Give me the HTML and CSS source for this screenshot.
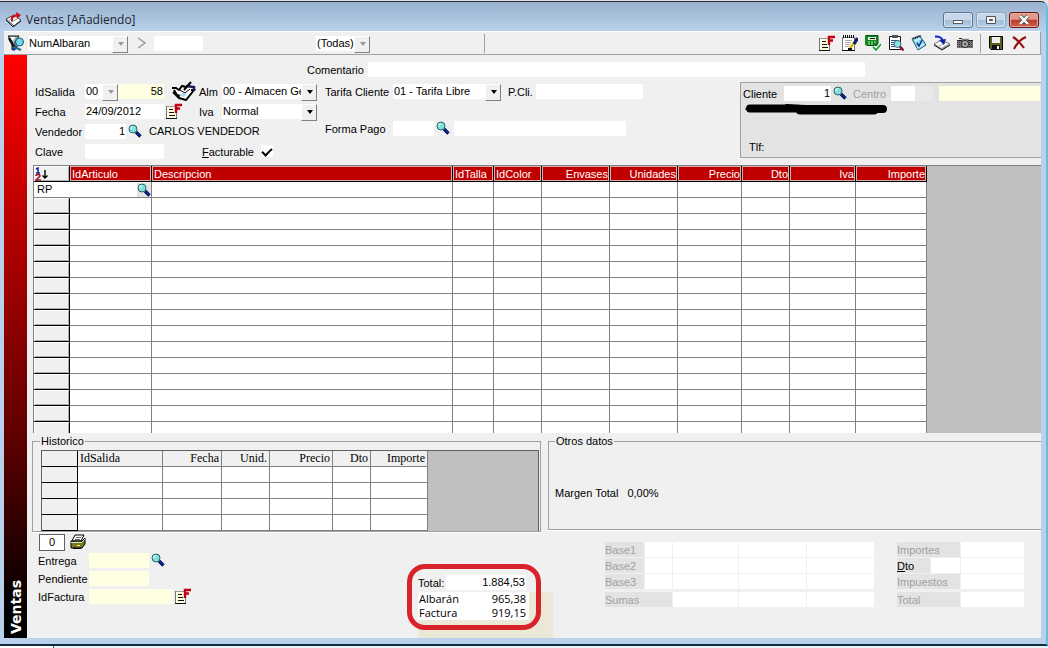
FILE: index.html
```
<!DOCTYPE html>
<html lang="es">
<head>
    <meta charset="UTF-8">
    <meta name="viewport" content="width=device-width, initial-scale=1.0">
    <title>Ventas [Añadiendo]</title>
    <link rel="stylesheet" href="styles.css">
</head>
<body>
    <!-- Shared icons -->
    <svg class="sprite" aria-hidden="true">
        <symbol id="lens" viewBox="0 0 14 14">
            <path d="M8 8l4.5 4.5" stroke="#001060" stroke-width="3.4"/>
            <path d="M9 8.400l3.600 3.600" stroke="#1848c0" stroke-width="1"/>
            <circle cx="5" cy="5" r="4" fill="#7fe0dc" stroke="#2a6670" stroke-width="1"/>
            <path d="M3 5V3h2" stroke="#fff" fill="none"/>
        </symbol>
        <symbol id="factura" viewBox="0 0 16 16">
            <path d="M1 3h9v12H1z" fill="#fffde0"/>
            <path d="M.5 3v12M10.500 10v5" stroke="#777" fill="none"/>
            <path d="M0 15.500h11" stroke="#111"/>
            <path d="M1 3.500h8" stroke="#999"/>
            <path d="M3 6.500h4M3 9.500h5M3 12.500h6" stroke="#111"/>
            <path d="M10 10V2h6M10 5.500h4" stroke="#c00010" stroke-width="2.400" fill="none"/>
        </symbol>
    </svg>

    <div class="window">
        <header class="titlebar">
            <svg class="icon" viewBox="0 0 16 16">
                <path d="M0 7l8-4 7 5-7 6z" fill="#fff" stroke="#444"/>
                <path d="M0 8l7 7 8-6" fill="none" stroke="#222"/>
                <path d="M3 8l6-3M5 10l6-3" stroke="#888"/>
                <path d="M6 9V5l5-2" fill="none" stroke="#d01020" stroke-width="2"/>
                <path d="M10 0l5 3-4 4z" fill="#d01020"/>
            </svg>
            <h1>Ventas [Añadiendo]</h1>
            <div class="window-buttons">
                <button type="button" aria-label="Minimizar"><svg viewBox="0 0 12 10"><path d="M1.500 5.500h9v3h-9z" fill="#fff" stroke="#555"/></svg></button>
                <button type="button" class="restore" aria-label="Restaurar"><svg viewBox="0 0 12 10"><path d="M1.500 1.500h9v7h-9z" fill="#eef3f8" stroke="#555"/><path d="M4.500 4.500h3v1h-3z" fill="none" stroke="#555"/></svg></button>
                <button type="button" class="close" aria-label="Cerrar"><svg viewBox="0 0 12 10"><path d="M2 1l8 8M10 1L2 9" stroke="#555" stroke-width="4"/><path d="M2 1l8 8M10 1L2 9" stroke="#fff" stroke-width="2.400"/></svg></button>
            </div>
        </header>

        <div class="toolbar">
            <svg class="icon" viewBox="0 0 16 16">
                <path d="M0 1h11L7 7v6l-3 2V7z" fill="#9cb8b8" stroke="#111"/>
                <path d="M2 2h5L5 6z" fill="#fff"/>
                <circle cx="11.500" cy="7" r="4" fill="#6fdce4" stroke="#205080"/>
                <path d="M1 3l5 9" stroke="#111" stroke-width="2.400"/>
                <path d="M9 11l-4 4" stroke="#1030a0" stroke-width="3"/>
                <path d="M6 12l7 3" stroke="#207080" stroke-width="2"/>
            </svg>
            <span class="combo off campo"><select aria-label="Campo"><option>NumAlbaran</option></select></span>
            <button type="button" class="next" aria-label="Siguiente"><svg viewBox="0 0 10 12"><path d="M1 1l7 5-7 5" fill="none" stroke="#999" stroke-width="1.500"/></svg></button>
            <input type="text" class="buscar" aria-label="Buscar">
            <span class="combo off filtro"><select aria-label="Filtro"><option>(Todas)</option></select></span>
            <span class="sep"></span>
            <div class="tools">
                <button type="button" aria-label="Factura"><svg class="icon"><use href="#factura"/></svg></button>
                <button type="button" aria-label="Notas"><svg class="icon" viewBox="0 0 16 16">
                    <path d="M.5 2.500h12v13H.5z" fill="#fff" stroke="#777"/>
                    <path d="M0 15.500h13" stroke="#111"/>
                    <path d="M1 1.500h12" stroke="#111" stroke-width="3" stroke-dasharray="1 1"/>
                    <path d="M3 5.500h7M3 7.500h6M3 9.500h5M3 11.500h4" stroke="#aaa"/>
                    <path d="M8 13l4-5" stroke="#d8b800" stroke-width="2.500"/>
                    <path d="M12 9l3.500-6" stroke="#102060" stroke-width="3.400"/>
                    <path d="M6 14h4" stroke="#111" stroke-width="2"/>
                </svg></button>
                <button type="button" aria-label="Calcular"><svg class="icon" viewBox="0 0 16 16">
                    <path d="M0 1h13v9H0z" fill="#118822"/>
                    <path d="M.5.500h12.500v10H1.500" fill="none" stroke="#075010"/>
                    <path d="M3 2h8v3H3z" fill="#d8f4d0"/>
                    <path d="M5 3.500h5" stroke="#111"/>
                    <path d="M3 7h8M3 9h6" stroke="#a8e8a0" stroke-dasharray="2 1"/>
                    <path d="M8 12l3 3 5-6" fill="none" stroke="#fff" stroke-width="4"/>
                    <path d="M8 12l3 3 5-6" fill="none" stroke="#20a030" stroke-width="1.800"/>
                </svg></button>
                <button type="button" aria-label="Consultar"><svg class="icon" viewBox="0 0 16 16">
                    <path d="M1.500 1.500h11v13h-11z" fill="#fff" stroke="#111"/>
                    <path d="M4 0h6v3H4z" fill="#456"/>
                    <path d="M3 5.500h8M3 7.500h5M3 9.500h4M3 11.500h4" stroke="#345090"/>
                    <circle cx="9.500" cy="9" r="3.500" fill="#8be4e6" stroke="#406878"/>
                    <path d="M12 11.500l3.500 4" stroke="#901020" stroke-width="2.400"/>
                </svg></button>
                <button type="button" aria-label="Verificar"><svg class="icon" viewBox="0 0 16 16">
                    <path d="M1 4l8-3 6 9-8 5z" fill="#8edfea" stroke="#245a70"/>
                    <path d="M2 3.500l8-3" stroke="#111" stroke-width="2" stroke-dasharray="1 1"/>
                    <path d="M4 6l5-2M6 13l7-4" stroke="#fff"/>
                    <path d="M6 8l2 3 3-6" fill="none" stroke="#1030a0" stroke-width="1.500"/>
                </svg></button>
                <button type="button" aria-label="Archivar"><svg class="icon" viewBox="0 0 16 16">
                    <path d="M0 9l7-4 9 4-8 5z" fill="#f8f8f8" stroke="#777"/>
                    <path d="M0 10l8 5 8-5" fill="none" stroke="#111"/>
                    <path d="M5 11l6-3M8 13l5-3" stroke="#aaa"/>
                    <path d="M1 1.500c5 0 7 1 8 5" fill="none" stroke="#0828c8" stroke-width="2"/>
                    <path d="M5 5l7-1-2 6z" fill="#0828a8"/>
                </svg></button>
                <button type="button" aria-label="Imagen"><svg class="icon" viewBox="0 0 16 16">
                    <path d="M0 5h4l2-2h5l1 2h4v8H0z" fill="#777"/>
                    <path d="M0 5.500h5M11 5.500h5M2 3.500h3" stroke="#222"/>
                    <path d="M0 7.500h16M0 9.500h16M0 11.500h16" stroke="#333" stroke-dasharray="1 1"/>
                    <path d="M5 3.500h6" stroke="#ddd"/>
                    <circle cx="8" cy="9" r="3.500" fill="#bbb" stroke="#222"/>
                    <circle cx="8" cy="9" r="1.500" fill="#555"/>
                </svg></button>
                <span class="sep"></span>
                <button type="button" aria-label="Guardar"><svg class="icon" viewBox="0 0 16 16">
                    <path d="M1.500 1.500h13v13H3l-1.500-2z" fill="#60601c" stroke="#000"/>
                    <path d="M4 2h8v6H4z" fill="#f0f0f0"/>
                    <path d="M4 10h8v5H4z" fill="#111"/>
                    <path d="M9 11h2v3H9z" fill="#eee"/>
                </svg></button>
                <button type="button" aria-label="Cancelar"><svg class="icon" viewBox="0 0 16 16">
                    <path d="M2 2c4 2 7 6 11 11M15 2C10 4 6 8 3 14" fill="none" stroke="#980c10" stroke-width="2"/>
                </svg></button>
            </div>
        </div>

        <div class="client">
            <aside class="sidebar"><span>Ventas</span></aside>

            <main>
                <form class="form">
                    <div class="row comentario">
                        <label for="comentario">Comentario</label>
                        <input type="text" id="comentario">
                    </div>
                    <div class="form-body">
                        <div class="datos">
                            <div class="row">
                                <label for="serie">IdSalida</label>
                                <span class="combo off serie"><select id="serie"><option>00</option></select></span>
                                <input type="text" class="numero yellow" aria-label="Número" value="58">
                                <svg class="icon libro" viewBox="0 0 24 20">
                                    <path d="M1 8l8-4 13 4-8 10-7-3z" fill="#fff"/>
                                    <path d="M0 7h4l3 2 3-4 4 1M2 9l3 5 3 1M1 11l6 6 7 2 8-10h-3" fill="none" stroke="#000" stroke-width="2"/>
                                    <path d="M8 9l5 3 5-4" fill="none" stroke="#000"/>
                                    <path d="M7 14l5 2 3-3-4-1z" fill="#a8dce4"/>
                                    <path d="M14 5l8 1v4" fill="none" stroke="#102050" stroke-width="2.500"/>
                                    <path d="M12 9l7-8" stroke="#000" stroke-width="2"/>
                                </svg>
                                <label for="almacen" class="mini">Alm</label>
                                <span class="combo ancho"><select id="almacen"><option>00 - Almacen General</option></select></span>
                            </div>
                            <div class="row">
                                <label for="fecha">Fecha</label>
                                <input type="text" id="fecha" class="medio" value="24/09/2012">
                                <svg class="icon factura"><use href="#factura"/></svg>
                                <label for="iva" class="mini">Iva</label>
                                <span class="combo ancho"><select id="iva"><option>Normal</option></select></span>
                            </div>
                            <div class="row">
                                <label for="vendedor">Vendedor</label>
                                <input type="text" id="vendedor" class="corto num" value="1">
                                <svg class="lens"><use href="#lens"/></svg>
                                <span class="nombre">CARLOS VENDEDOR</span>
                            </div>
                            <div class="row">
                                <label for="clave">Clave</label>
                                <input type="text" id="clave" class="medio">
                                <label for="facturable" class="facturable"><u>F</u>acturable</label>
                                <input type="checkbox" id="facturable" checked>
                            </div>
                        </div>

                        <div class="condiciones">
                            <div class="row">
                                <label for="tarifa">Tarifa Cliente</label>
                                <span class="combo tarifa"><select id="tarifa"><option>01 - Tarifa Libre</option></select></span>
                                <label for="pcli" class="pcli">P.Cli.</label>
                                <input type="text" id="pcli" class="largo">
                            </div>
                            <div class="row pago">
                                <label for="pago">Forma Pago</label>
                                <input type="text" id="pago" class="corto">
                                <svg class="lens"><use href="#lens"/></svg>
                                <input type="text" class="descripcion" aria-label="Descripción de pago">
                            </div>
                        </div>

                        <div class="cliente">
                            <div class="row">
                                <label for="cliente">Cliente</label>
                                <input type="text" id="cliente" class="id num" value="1">
                                <svg class="lens"><use href="#lens"/></svg>
                                <label for="centro" class="centro">Centro</label>
                                <input type="text" id="centro" class="centro-id">
                                <input type="text" class="yellow centro-nombre" aria-label="Nombre del centro">
                            </div>
                            <svg class="tachado" viewBox="0 0 144 12">
                                <path d="M5 5.500h48M42 5l18 1h78" stroke="#000" stroke-width="8" stroke-linecap="round" fill="none"/>
                                <path d="M55 7.500h74" stroke="#000" stroke-width="8" stroke-linecap="round"/>
                                <path d="M0 6h6" stroke="#000"/>
                            </svg>
                            <p class="tlf">Tlf:</p>
                        </div>
                    </div>
                </form>

                <div class="lineas">
                    <table>
                        <colgroup>
                            <col class="w36"><col class="w82"><col class="w301"><col class="w41"><col class="w48"><col class="w68"><col class="w68"><col class="w64"><col class="w48"><col class="w66"><col class="w71">
                        </colgroup>
                        <thead>
                            <tr>
                                <td class="orden"><svg viewBox="0 0 14 14"><path d="M1 2l2-1v5M1 6h4" fill="none" stroke="#1020b0" stroke-width="1.500"/><path d="M1 9c0-2 4-2 4 0L1 13h5" fill="none" stroke="#a01020" stroke-width="1.500"/><path d="M10 3v8M7.500 8.500L10 11l2.500-2.500" fill="none" stroke="#000" stroke-width="1.400"/></svg></td>
                                <th class="izq">IdArticulo</th><th class="izq">Descripcion</th><th class="izq">IdTalla</th><th class="izq">IdColor</th><th>Envases</th><th>Unidades</th><th>Precio</th><th>Dto</th><th>Iva</th><th>Importe</th>
                            </tr>
                        </thead>
                        <tbody>
                            <tr class="actual"><td>RP</td><td><svg class="lens"><use href="#lens"/></svg></td><td></td><td></td><td></td><td></td><td></td><td></td><td></td><td></td><td></td></tr>
                            <tr><td></td><td></td><td></td><td></td><td></td><td></td><td></td><td></td><td></td><td></td><td></td></tr>
                            <tr><td></td><td></td><td></td><td></td><td></td><td></td><td></td><td></td><td></td><td></td><td></td></tr>
                            <tr><td></td><td></td><td></td><td></td><td></td><td></td><td></td><td></td><td></td><td></td><td></td></tr>
                            <tr><td></td><td></td><td></td><td></td><td></td><td></td><td></td><td></td><td></td><td></td><td></td></tr>
                            <tr><td></td><td></td><td></td><td></td><td></td><td></td><td></td><td></td><td></td><td></td><td></td></tr>
                            <tr><td></td><td></td><td></td><td></td><td></td><td></td><td></td><td></td><td></td><td></td><td></td></tr>
                            <tr><td></td><td></td><td></td><td></td><td></td><td></td><td></td><td></td><td></td><td></td><td></td></tr>
                            <tr><td></td><td></td><td></td><td></td><td></td><td></td><td></td><td></td><td></td><td></td><td></td></tr>
                            <tr><td></td><td></td><td></td><td></td><td></td><td></td><td></td><td></td><td></td><td></td><td></td></tr>
                            <tr><td></td><td></td><td></td><td></td><td></td><td></td><td></td><td></td><td></td><td></td><td></td></tr>
                            <tr><td></td><td></td><td></td><td></td><td></td><td></td><td></td><td></td><td></td><td></td><td></td></tr>
                            <tr><td></td><td></td><td></td><td></td><td></td><td></td><td></td><td></td><td></td><td></td><td></td></tr>
                            <tr><td></td><td></td><td></td><td></td><td></td><td></td><td></td><td></td><td></td><td></td><td></td></tr>
                            <tr><td></td><td></td><td></td><td></td><td></td><td></td><td></td><td></td><td></td><td></td><td></td></tr>
                            <tr><td></td><td></td><td></td><td></td><td></td><td></td><td></td><td></td><td></td><td></td><td></td></tr>
                        </tbody>
                    </table>
                </div>

                <div class="paneles">
                    <fieldset class="historico">
                        <legend>Historico</legend>
                        <div class="historico-grid">
                            <table>
                                <colgroup>
                                    <col class="w36"><col class="w85"><col class="w59"><col class="w48"><col class="w63"><col class="w38"><col class="w57">
                                </colgroup>
                                <thead>
                                    <tr><td></td><th class="izq">IdSalida</th><th>Fecha</th><th>Unid.</th><th>Precio</th><th>Dto</th><th>Importe</th></tr>
                                </thead>
                                <tbody>
                                    <tr><td></td><td></td><td></td><td></td><td></td><td></td><td></td></tr>
                                    <tr><td></td><td></td><td></td><td></td><td></td><td></td><td></td></tr>
                                    <tr><td></td><td></td><td></td><td></td><td></td><td></td><td></td></tr>
                                    <tr><td></td><td></td><td></td><td></td><td></td><td></td><td></td></tr>
                                </tbody>
                            </table>
                        </div>
                    </fieldset>
                    <fieldset class="otros">
                        <legend>Otros datos</legend>
                        <p class="margen"><span>Margen Total</span><span>0,00%</span></p>
                    </fieldset>
                </div>

                <footer class="pie">
                    <div class="entrega">
                        <div class="row">
                            <input type="text" class="copias" aria-label="Copias" value="0">
                            <svg class="icon" viewBox="0 0 16 16">
                                <path d="M5 1h9l-3 6H2z" fill="#fff" stroke="#000"/>
                                <path d="M6 3.500h5M5 5.500h5" stroke="#666"/>
                                <path d="M1 7h11l3-3v6l-3 4H1z" fill="#777720" stroke="#000"/>
                                <path d="M1 8.500h11M12 8l3-3" stroke="#ddd"/>
                                <path d="M7 11.500h3" stroke="#fff060"/>
                                <path d="M3 14.500h8" stroke="#000"/>
                            </svg>
                        </div>
                        <div class="row">
                            <label for="entrega">Entrega</label>
                            <input type="text" id="entrega" class="yellow">
                            <svg class="lens"><use href="#lens"/></svg>
                        </div>
                        <div class="row">
                            <label for="pendiente">Pendiente</label>
                            <input type="text" id="pendiente" class="yellow">
                        </div>
                        <div class="row">
                            <label for="idfactura">IdFactura</label>
                            <input type="text" id="idfactura" class="yellow id-factura">
                            <svg class="icon"><use href="#factura"/></svg>
                        </div>
                    </div>

                    <div class="total">
                        <div class="row">
                            <label for="total">Total:</label>
                            <input type="text" id="total" class="num" value="1.884,53">
                        </div>
                        <dl>
                            <dt>Albarán</dt><dd>965,38</dd>
                            <dt>Factura</dt><dd>919,15</dd>
                        </dl>
                    </div>

                    <div class="bases">
                        <label for="base1">Base1</label><input type="text" id="base1"><input type="text" aria-label="Base1 importe"><input type="text" aria-label="Base1 IVA"><input type="text" aria-label="Base1 recargo">
                        <label for="base2">Base2</label><input type="text" id="base2"><input type="text" aria-label="Base2 importe"><input type="text" aria-label="Base2 IVA"><input type="text" aria-label="Base2 recargo">
                        <label for="base3">Base3</label><input type="text" id="base3"><input type="text" aria-label="Base3 importe"><input type="text" aria-label="Base3 IVA"><input type="text" aria-label="Base3 recargo">
                        <label for="sumas" class="sumas">Sumas</label><input type="text" id="sumas" class="ultima"><input type="text" class="ultima" aria-label="Suma IVA"><input type="text" class="ultima" aria-label="Suma recargo">
                    </div>

                    <div class="importes">
                        <label for="importes" class="doble">Importes</label><input type="text" id="importes">
                        <label for="dto" class="dto"><u>D</u>to</label><input type="text" id="dto"><input type="text" aria-label="Importe dto">
                        <label for="impuestos" class="doble">Impuestos</label><input type="text" id="impuestos">
                        <label for="total-final" class="doble ultima">Total</label><input type="text" id="total-final" class="ultima">
                    </div>
                </footer>
            </main>
        </div>
    </div>
    <div class="desktop"></div>
</body>
</html>
```

FILE: styles.css
```
:root {
    --face: #f0f0f0;
    --frame: #b9d1ea;
    --line: #a0a0a0;
    --grid: #808080;
    --yellow: #ffffe1;
    --red: #c00000;
}

* {
    margin: 0;
    padding: 0;
    box-sizing: border-box;
}

body {
    height: 100vh;
    min-width: 1040px;
    padding-top: 1px;
    display: flex;
    flex-direction: column;
    background: #e8e0e2;
    color: #000;
    font: 11px/15px "Liberation Sans", Arial, sans-serif;
    overflow: hidden;
}

.sprite {
    position: absolute;
    width: 0;
    height: 0;
}

.icon {
    width: 16px;
    height: 16px;
    flex: none;
    display: block;
}

.lens {
    width: 14px;
    height: 14px;
    flex: none;
    display: block;
    margin-left: 2px;
}

button {
    background: none;
    border: 0;
}

input,
select {
    height: 15px;
    min-width: 0;
    border: 0;
    border-radius: 0;
    outline: 0;
    padding: 0 1px;
    background: #fff;
    color: #000;
    font: inherit;
    appearance: none;
}

label {
    flex: none;
    white-space: nowrap;
}

.row {
    display: flex;
    align-items: center;
    height: 16px;
}

.row label {
    padding-top: 2px;
}

.num {
    text-align: right;
}

.yellow {
    background: var(--yellow);
}

/* Window frame */
.window {
    flex: 1;
    min-height: 0;
    display: flex;
    flex-direction: column;
    padding: 0 5px 6px 4px;
    background: var(--frame);
    border-top: 1px solid #1f302e;
    border-right: 2px solid #68bce4;
    border-bottom: 2px solid #0d2c3c;
    border-radius: 0 7px 0 0;
}

.desktop {
    height: 2px;
    background: linear-gradient(90deg, #fff 53px, #345 53px, #345 54px, #e6f3fb 54px);
}

.titlebar {
    height: 29px;
    flex: none;
    display: flex;
    align-items: center;
    gap: 4px;
    margin: 0 -5px 0 -4px;
    padding: 6px 7px 0 6px;
    background: linear-gradient(#98b1ce, var(--frame));
    border-radius: 0 6px 0 0;
}

.titlebar h1 {
    flex: 1;
    color: #1c2530;
    font: 12px/16px "Open Sans", "Noto Sans", sans-serif;
}

.window-buttons {
    display: flex;
    gap: 3px;
}

.window-buttons button {
    width: 30px;
    height: 16px;
    display: flex;
    align-items: center;
    justify-content: center;
    border: 1px solid #5c7590;
    border-radius: 3px;
    background: linear-gradient(#c6d8ea 50%, #a2bcd8 50%, #b8d0e8);
    box-shadow: inset 0 0 0 1px #d8e6f2;
}

.window-buttons .restore {
    border-color: #8ba3bc;
}

.window-buttons .close {
    border-color: #6c1c18;
    background: linear-gradient(#e09a8c 45%, #bc3c28 50%, #d0604c);
    box-shadow: inset 0 0 0 1px #e8a898;
}

.window-buttons svg {
    width: 12px;
    height: 10px;
}

/* Toolbar */
.toolbar {
    height: 24px;
    flex: none;
    display: flex;
    align-items: center;
    padding-left: 4px;
    background: var(--face);
    border-top: 1px solid #fff;
    border-right: 1px solid var(--line);
    border-bottom: 1px solid var(--line);
}

.next {
    width: 10px;
    height: 12px;
    margin: 0 7px 0 9px;
}

.next svg {
    display: block;
}

.buscar {
    width: 49px;
}

.sep {
    width: 1px;
    height: 19px;
    background: var(--line);
}

.tools {
    display: flex;
    align-items: center;
    gap: 7px;
    margin-left: auto;
    padding-right: 13px;
}

/* Drop-downs with a raised arrow button */
.combo {
    position: relative;
    flex: none;
    display: flex;
}

.combo select {
    width: 100%;
    padding-right: 14px;
}

.combo::before {
    content: '';
    position: absolute;
    top: 0;
    right: 0;
    width: 14px;
    height: 15px;
    background: var(--face);
    border: 1px solid #fff;
    border-right-color: #808080;
    border-bottom-color: #808080;
    pointer-events: none;
}

.combo::after {
    content: '';
    position: absolute;
    top: 6px;
    right: 4px;
    border: 3px solid transparent;
    border-top: 4px solid #000;
    border-bottom: 0;
    pointer-events: none;
}

.combo.off::after {
    border-top-color: #999;
}

.campo {
    width: 100px;
    margin-left: 4px;
}

.filtro {
    width: 54px;
    margin: 0 114px 0 113px;
}

/* Client area */
.client {
    position: relative;
    z-index: 0;
    flex: 1;
    min-height: 0;
    display: flex;
    background: var(--face);
}

.sidebar {
    width: 23px;
    flex: none;
    display: flex;
    align-items: flex-end;
    justify-content: center;
    padding-bottom: 4px;
    background: linear-gradient(#f00, #c80000 22%, #600000 65%, #000 96%);
}

.sidebar span {
    color: #fff;
    font: bold 14px/18px "DejaVu Sans", Verdana, sans-serif;
    writing-mode: vertical-rl;
    transform: rotate(180deg);
}

main {
    flex: 1;
    min-width: 0;
    display: flex;
    flex-direction: column;
    padding-left: 6px;
}

/* Header form */
.form {
    padding: 6px 0 6px 2px;
}

.comentario {
    margin: 0 176px 5px 272px;
}

.comentario label {
    width: 61px;
}

.comentario input {
    flex: 1;
}

.form-body {
    display: flex;
    align-items: flex-start;
}

.datos {
    width: 290px;
    display: grid;
    gap: 4px;
    padding-top: 1px;
}

.datos .row > label:first-child {
    width: 50px;
}

.serie {
    width: 33px;
}

.numero {
    width: 46px;
    text-align: right;
}

.medio {
    width: 79px;
}

.corto {
    width: 41px;
}

.largo {
    width: 107px;
}

.libro {
    width: 24px;
    height: 20px;
    margin: 0 3px 0 8px;
}

.factura {
    margin: 0 17px 0 2px;
}

.datos .mini {
    width: 23px;
}

.ancho {
    width: 95px;
}

.nombre {
    margin-left: 7px;
}

.datos .facturable {
    margin: 0 7px 0 38px;
}

input[type="checkbox"] {
    width: 12px;
    height: 12px;
    display: grid;
    place-items: center;
}

input[type="checkbox"]:checked::before {
    content: '';
    width: 8px;
    height: 4px;
    border: solid #000;
    border-width: 0 0 2px 2px;
    transform: rotate(-45deg);
}

.condiciones {
    display: grid;
    gap: 21px;
    padding-top: 1px;
}

.condiciones .row > label:first-child {
    width: 68px;
}

.tarifa {
    width: 108px;
}

.pcli {
    width: 35px;
    padding-left: 7px;
}

.descripcion {
    width: 172px;
    margin-left: 4px;
}

.cliente {
    width: 301px;
    height: 76px;
    margin-left: auto;
    padding: 2px 1px 0 2px;
    background: #e3e3e3;
    border: 1px solid var(--line);
    border-right: 0;
}

.cliente label {
    width: 41px;
}

.cliente .id {
    width: 47px;
}

.cliente .centro {
    width: 38px;
    margin-left: 6px;
    color: #a0a0a0;
}

.centro-id {
    width: 42px;
    background: linear-gradient(90deg, #fff 24px, #e9e9e9 24px);
}

.centro-nombre {
    flex: 1;
    margin-left: 6px;
}

.tachado {
    width: 144px;
    height: 12px;
    display: block;
    margin: 2px 0 25px 2px;
}

.tlf {
    padding-left: 6px;
}

/* Tables */
table {
    table-layout: fixed;
    border-spacing: 0;
    width: 0;
}

th,
td {
    height: 16px;
    padding: 0;
    border-right: 1px solid var(--grid);
    border-bottom: 1px solid var(--grid);
    background: #fff;
    overflow: hidden;
    white-space: nowrap;
    line-height: 13px;
}

th {
    padding: 1px 1px 0;
    text-align: right;
    font-weight: normal;
}

.izq {
    text-align: left;
}

td:first-child {
    background: var(--face);
    border-right-color: #000;
    border-bottom-color: #000;
}

.w36 { width: 36px; }
.w38 { width: 38px; }
.w41 { width: 41px; }
.w48 { width: 48px; }
.w57 { width: 57px; }
.w59 { width: 59px; }
.w63 { width: 63px; }
.w64 { width: 64px; }
.w66 { width: 66px; }
.w68 { width: 68px; }
.w71 { width: 71px; }
.w82 { width: 82px; }
.w85 { width: 85px; }
.w301 { width: 301px; }

.lineas {
    flex: 1 1 0;
    min-height: 120px;
    overflow: hidden;
    background: #c0c0c0;
    border-top: 1px solid var(--grid);
    border-left: 1px solid var(--grid);
}

.lineas th {
    background: var(--red);
    color: #fff;
    border-right-color: #000;
    border-bottom-color: #000;
    box-shadow: inset 0 0 0 1px #d8b0b0;
}

.lineas .izq {
    padding-left: 2px;
}

.lineas td:first-child {
    box-shadow: inset 1px 1px #fff, inset -1px -1px #b0b0b0;
}

.orden svg {
    width: 14px;
    height: 14px;
    display: block;
    margin-left: 1px;
}

.lineas .actual td:first-child {
    padding-left: 3px;
    background: #fff;
    border-right-color: #fff;
    border-bottom-color: var(--grid);
    box-shadow: none;
}

.actual .lens {
    margin-left: auto;
    background: #e4e4e4;
}

/* Group boxes */
.paneles {
    display: flex;
    gap: 7px;
    padding-top: 2px;
}

fieldset {
    min-width: 0;
    border: 1px solid var(--line);
    box-shadow: 0 1px #fff;
}

legend {
    padding: 0 1px;
    line-height: 13px;
}

.historico {
    width: 509px;
    margin-left: -1px;
    padding: 2px 1px 0 8px;
}

.historico legend {
    margin-left: -1px;
}

.otros {
    flex: 1;
    margin-bottom: 2px;
    padding-left: 6px;
    border-right: 0;
}

.historico-grid {
    height: 81px;
    overflow: hidden;
    background: #c0c0c0;
    border: 1px solid #606060;
    border-bottom: 0;
}

.historico-grid th {
    padding: 0 2px;
    background: var(--face);
    font: 12px/13px "Liberation Serif", "Times New Roman", serif;
}

.margen {
    display: flex;
    gap: 9px;
    padding-top: 38px;
}

/* Footer */
.pie {
    flex: none;
    height: 106px;
    display: flex;
    align-items: flex-start;
    padding: 2px 17px 0 5px;
}

.entrega {
    flex: 1;
    display: grid;
    gap: 2px;
}

.entrega label {
    width: 51px;
}

.entrega input {
    width: 60px;
}

.entrega .copias {
    width: 26px;
    height: 17px;
    margin: 0 5px 0 1px;
    border: 1px solid #606060;
    text-align: center;
}

.entrega .id-factura {
    width: 84px;
    margin-right: 2px;
}

.total {
    position: relative;
    width: 134px;
    margin: 30px 64px 0 0;
    padding: 5px 7px 5px 6px;
    border: 5px solid #d9232b;
    border-radius: 18px;
}

/* Beige block showing behind the totals */
.total::before {
    content: '';
    position: absolute;
    z-index: -1;
    top: 23px;
    left: 6px;
    width: 135px;
    height: 46px;
    background: #ece8d8;
}

.total label {
    width: 28px;
}

.total input {
    flex: 1;
    margin-right: 3px;
}

.total dl {
    display: grid;
    grid-template-columns: 1fr auto;
    margin-top: 2px;
    padding: 0 3px 0 1px;
    background: #fff;
    font: 11px/14px "Open Sans", "Noto Sans", sans-serif;
}

.bases,
.importes {
    display: grid;
    gap: 1px;
    margin-top: 8px;
}

.bases {
    width: 269px;
    margin-right: 23px;
    grid-template-columns: 39px 27px 65px 67px 67px;
}

.importes {
    width: 127px;
    grid-template-columns: 33px 29px 63px;
}

.bases label,
.importes label {
    height: 15px;
    background: #e3e3e3;
    color: #a0a0a0;
    line-height: 16px;
}

.bases input,
.importes input {
    width: 100%;
}

.sumas,
.doble {
    grid-column: span 2;
}

.sumas,
.ultima {
    margin-top: 2px;
}

.importes .dto {
    color: #000;
}
```
